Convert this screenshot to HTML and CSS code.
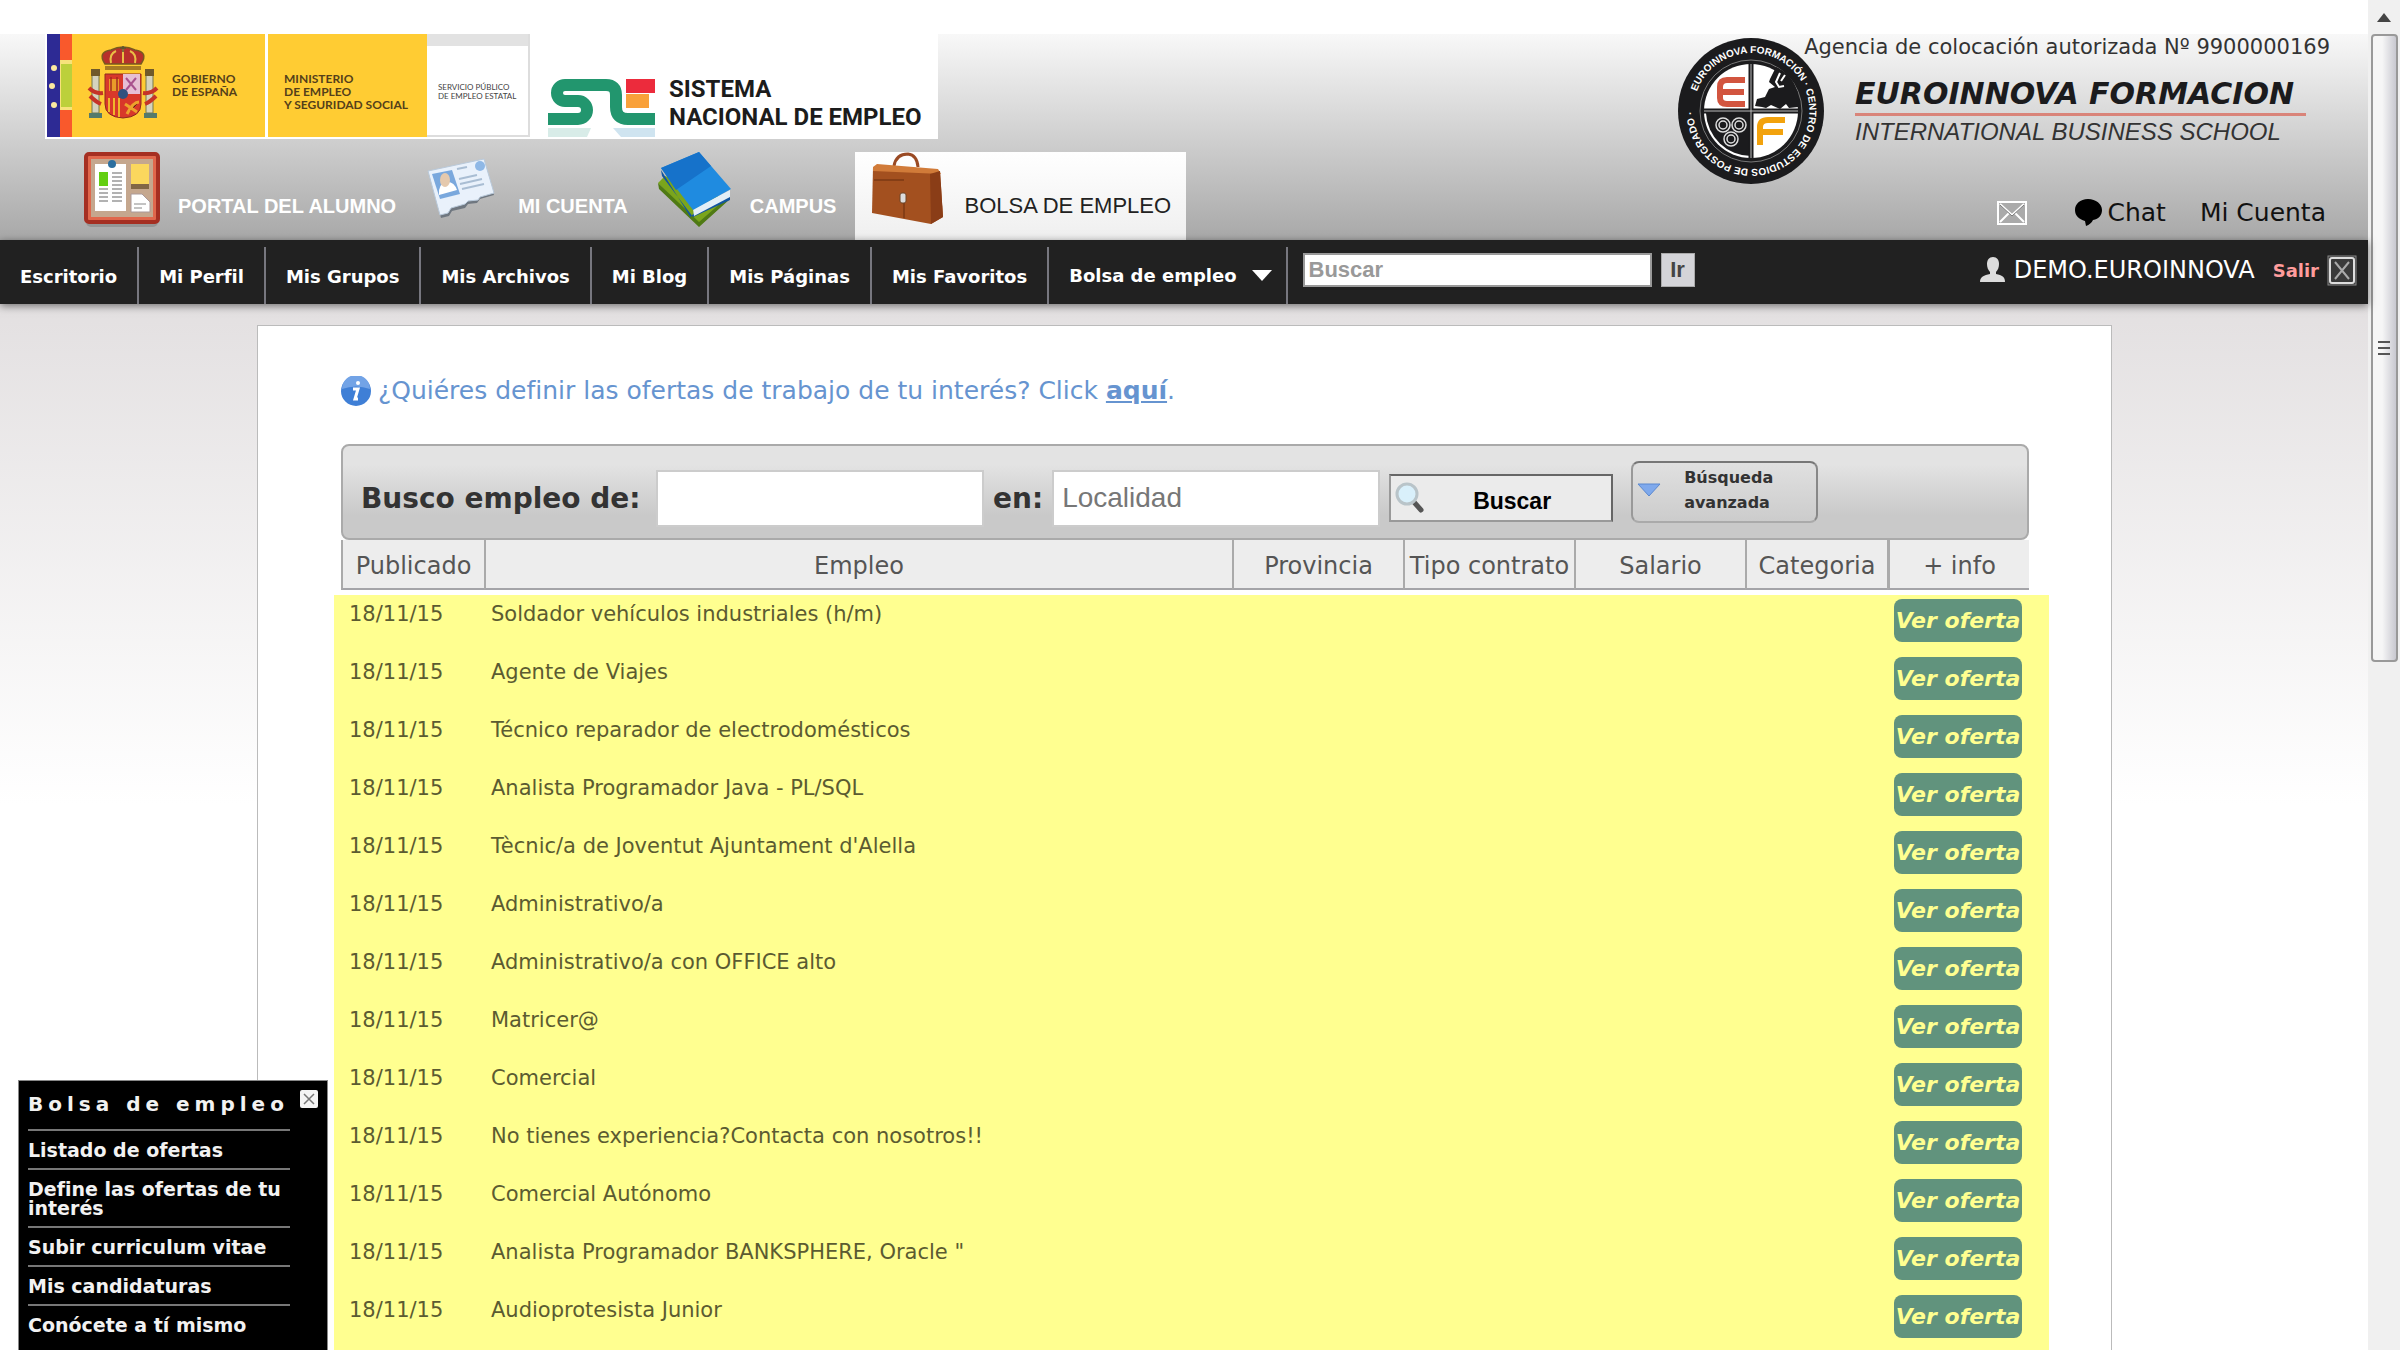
FILE: index.html
```html
<!DOCTYPE html>
<html lang="es">
<head>
<meta charset="utf-8">
<title>Bolsa de empleo - Euroinnova Formación</title>
<link rel="stylesheet" href="styles.css">
</head>
<body>
<div class="page">
  <header class="header">
    <div class="header-left">
      <svg class="sponsors" width="893" height="105" viewBox="0 0 893 105" role="img" aria-label="Gobierno de España, Sistema Nacional de Empleo">
        <rect width="893" height="105" fill="#fff"/>
        <rect x="2" width="13" height="103" fill="#2d2a94"/>
        <rect x="15" width="12" height="103" fill="#f9592c"/>
        <rect x="15" y="26" width="12" height="50" fill="#f7e27a"/>
        <rect x="16" y="30" width="11" height="43" fill="#bcd03b"/>
        <g fill="#fbe9a0"><circle cx="9" cy="34" r="3"/><circle cx="7" cy="52" r="3"/><circle cx="9" cy="71" r="3"/></g>
        <rect x="27" width="193" height="103" fill="#ffcc33"/>
        <rect x="223" width="159" height="103" fill="#ffcc33"/>
        <rect x="382" width="103" height="12" fill="#e2e2e2"/>
        <path d="M484 0V102H382" fill="none" stroke="#ddd" stroke-width="2"/>
        <g>
          <path d="M60 30q-8-12 6-14q12-6 24 0q14 2 6 14z" fill="#b8312b" stroke="#7a5a20" stroke-width="1.5"/>
          <path d="M66 29q-2-9 5-12M78 29V15M90 29q2-9-5-12" stroke="#e9bf45" stroke-width="2" fill="none"/>
          <path d="M60 34h36" stroke="#a87b23" stroke-width="4"/>
          <path d="M78 12v6M75 14h6" stroke="#5c5630" stroke-width="1.5"/>
          <path d="M60 40H96V70q0 13-18 14q-18-1-18-14z" fill="#d8382a" stroke="#8e2a20"/>
          <path d="M78 40h17v20H78z" fill="#e6bfd4"/>
          <path d="M81 44l10 12M91 44l-10 12" stroke="#a9528e" stroke-width="2"/>
          <path d="M64 45h10v12H64z" fill="#e99b29"/><path d="M66 43v14M72 43v14" stroke="#a42b20" stroke-width="1.5"/>
          <path d="M64 64v14M69 64v17M74 64v19" stroke="#f0b52b" stroke-width="2"/>
          <path d="M82 80q6-12 12-12M80 70l12 8" stroke="#eda22c" stroke-width="3"/>
          <circle cx="78" cy="60" r="5" fill="#32517f"/>
          <g fill="#d5d3bd" stroke="#77794c" stroke-width="1"><rect x="47" y="40" width="7" height="39"/><rect x="101" y="40" width="7" height="39"/></g>
          <path d="M46 35h9v7h-9zM100 35h9v7h-9z" fill="#705a2a"/>
          <path d="M44 79h13v5H44zM99 79h13v5H99z" fill="#557a6b"/>
          <path d="M44 54q6 6 14 5M45 62q6 6 11 8M112 54q-6 6-14 5M111 62q-6 6-11 8" stroke="#c63427" stroke-width="4" fill="none"/>
        </g>
        <g class="gov-text" fill="#54401a">
          <text x="127" y="49">GOBIERNO</text><text x="127" y="62">DE ESPAÑA</text>
          <text x="239" y="49">MINISTERIO</text><text x="239" y="62">DE EMPLEO</text><text x="239" y="75">Y SEGURIDAD SOCIAL</text>
        </g>
        <g class="sepe-text" fill="#444"><text x="393" y="56">SERVICIO PÚBLICO</text><text x="393" y="65">DE EMPLEO ESTATAL</text></g>
        <g fill="none" stroke="#22966e" stroke-width="12">
          <path d="M503 85H533a9 9 0 0 0 0-18H520a8 8 0 0 1 0-16H561q10 0 10 10V73q0 12 12 12H610"/>
        </g>
        <path d="M581 45h29v14h-29z" fill="#ec2b3c"/>
        <path d="M581 60h23v14h-23z" fill="#f9a13a"/>
        <path d="M503 94h43l-4 9h-39z" fill="#d8ece8"/><path d="M568 94h42v9h-34z" fill="#cfe4f0"/>
        <g class="sne-text" fill="#1c1c1c"><text x="624" y="63">SISTEMA</text><text x="624" y="91">NACIONAL DE EMPLEO</text></g>
      </svg>
      <nav class="tabs">
        <a class="tab" href="#">
          <svg width="76" height="76" viewBox="0 0 76 76" aria-hidden="true">
            <rect x="2" y="6" width="72" height="69" rx="5" fill="#777" opacity=".45"/>
            <rect x="2" y="2" width="72" height="68" rx="3" fill="#e0674c" stroke="#a52f22" stroke-width="4"/>
            <rect x="7" y="7" width="62" height="58" fill="#c5a78e"/>
            <rect x="11" y="12" width="31" height="47" fill="#fff"/>
            <rect x="15" y="20" width="9" height="14" fill="#63cf12"/>
            <path d="M28 21h10M28 25h10M28 29h10M28 33h10M28 37h10M28 41h10M28 45h10M28 49h10M15 37h9M15 41h9M15 45h9M15 49h9" stroke="#999" stroke-width="1.5"/>
            <circle cx="28" cy="12" r="4" fill="#2d6f9f"/>
            <path d="M47 15h18v22H47z" fill="#826646"/><path d="M47 12h18v20H47z" fill="#fbd75d"/>
            <path d="M47 42h11l8 8v10H47z" fill="#fff" stroke="#a99"/><path d="M50 52h12M50 56h8" stroke="#888"/>
          </svg>
          <span>PORTAL DEL ALUMNO</span>
        </a>
        <a class="tab" href="#">
          <svg width="76" height="76" viewBox="0 0 76 76" aria-hidden="true">
            <path d="M5 22L60 9l10 34-14 4-3 4-9 1-3 4-13 3-3 5-8 2z" fill="#6f7780"/>
            <path d="M4 19L60 7l10 34-14 4-2 3-10 1-3 3-14 4-3 5-8 2z" fill="#e9f1fb" stroke="#b9c9da"/>
            <path d="M8 22l20-4 8 24-20 5z" fill="#7aa8dd"/>
            <path d="M15 43q-1-11 7-13q8-1 11 8z" fill="#fff"/><ellipse cx="21" cy="28" rx="5" ry="7" fill="#e5c9ad"/>
            <path d="M33 17l10-2M35 27l18-4M36 32l22-5M38 37l22-5" stroke="#a9bdd3" stroke-width="2"/>
            <circle cx="56" cy="14" r="5" fill="#8fb8e6"/>
          </svg>
          <span>MI CUENTA</span>
        </a>
        <a class="tab" href="#">
          <svg width="76" height="76" viewBox="0 0 76 76" aria-hidden="true">
            <path d="M2 31L9 24 72 48 43 74z" fill="#7aa51c"/>
            <path d="M2 31l41 39 31-27v4L43 75 3 37z" fill="#4f7a14"/>
            <path d="M5 18L35 66q-4-3 39-26v8L37 65 6 24z" fill="#12549f"/>
            <path d="M37 57L74 38v7L38 64z" fill="#e3eef6"/>
            <path d="M5 16L43 0 75 37 37 58z" fill="#1f8be0"/>
            <path d="M5 16L43 0l12 14L20 38z" fill="#1672ca"/>
          </svg>
          <span>CAMPUS</span>
        </a>
        <a class="tab tab-active" href="#">
          <svg width="76" height="76" viewBox="0 0 76 76" aria-hidden="true">
            <path d="M24 14Q26 2 38 2q9 1 10 13" fill="none" stroke="#9a4a24" stroke-width="3"/>
            <path d="M3 15L70 19l3 46-12 7L2 61z" fill="#a3501f"/>
            <path d="M3 15l4-3 61 5 3 5-68-3z" fill="#d17b39"/>
            <path d="M60 22l10-3 3 46-12 7z" fill="#8a3d17"/>
            <path d="M4 28h30M34 46v20" stroke="#7c3815" stroke-width="1.5"/>
            <rect x="30" y="41" width="6" height="10" rx="2" fill="#ddd" stroke="#6f4427"/>
          </svg>
          <span>BOLSA DE EMPLEO</span>
        </a>
      </nav>
    </div>
    <div class="header-right">
      <div class="brand">
        <svg class="badge" width="148" height="148" viewBox="0 0 148 148" role="img" aria-label="Sello Euroinnova Formación">
          <circle cx="74" cy="74" r="73" fill="#1b1b1d"/>
          <circle cx="74" cy="74" r="51" fill="none" stroke="#777" stroke-width="1"/>
          <circle cx="74" cy="74" r="47" fill="#fff"/>
          <path d="M74 76V119A45 45 0 0 1 29 76z" fill="#1b1b1d"/>
          <path d="M74 27V121M27 74H121" stroke="#1b1b1d" stroke-width="5"/>
          <path d="M74 27V121M27 74H121" stroke="#bbb" stroke-width="1"/>
          <path d="M68 43H50q-7 0-7 7v11q0 6 7 6H68M44 55H67" fill="none" stroke="#d2553f" stroke-width="6"/>
          <path d="M83 108V90q0-7 8-7H108M84 95H106" fill="none" stroke="#f2a20d" stroke-width="6"/>
          <path d="M93 42l6-12q18 8 22 28l0 12-9 1-3-4-6 5-9-4-5 3-4-1-7-1 2-7 8-2 4-8 6-2-6-5z" fill="#1b1b1d"/>
          <path d="M103 36l-4 9 3 5 5-1M108 38l-4 6" fill="none" stroke="#fff" stroke-width="2"/>
          <g fill="none" stroke="#ddd" stroke-width="1.5"><circle cx="46" cy="88" r="7"/><circle cx="62" cy="88" r="7"/><circle cx="54" cy="102" r="7"/><circle cx="46" cy="88" r="4"/><circle cx="62" cy="88" r="4"/><circle cx="54" cy="102" r="4"/></g>
          <path id="ring" d="M17 66A58 58 0 1 1 17 82A58 58 0 0 1 17 66" fill="none"/>
          <text class="ring-text" fill="#fff"><textPath href="#ring" startOffset="12">EUROINNOVA FORMACIÓN · CENTRO DE ESTUDIOS DE POSTGRADO ·</textPath></text>
        </svg>
        <div class="brand-text">
          <p class="agency">Agencia de colocación autorizada Nº 9900000169</p>
          <p class="brand-name">EUROINNOVA FORMACION</p>
          <p class="brand-sub">INTERNATIONAL BUSINESS SCHOOL</p>
        </div>
      </div>
      <div class="quick-links">
        <a class="mail" href="#" aria-label="Mensajes">
          <svg width="30" height="24" viewBox="0 0 30 24"><rect x="1" y="1" width="28" height="22" fill="#aaa" stroke="#fff" stroke-width="2"/><path d="M3 3l12 11L27 3M3 21l9-9M27 21l-9-9" fill="none" stroke="#fff" stroke-width="2"/><path d="M3 4l12 11L27 4" fill="none" stroke="#777"/></svg>
        </a>
        <a class="chat" href="#">
          <svg width="27" height="28" viewBox="0 0 27 28" aria-hidden="true"><path d="M13 0C5 0 0 5 0 11s4 9 10 11l1 5q5-2 7-6c6-1 9-5 9-10C27 5 21 0 13 0z" fill="#000"/></svg>
          Chat
        </a>
        <a href="#">Mi Cuenta</a>
      </div>
    </div>
  </header>

  <nav class="navbar">
    <a class="nav-item" href="#">Escritorio</a>
    <a class="nav-item" href="#">Mi Perfil</a>
    <a class="nav-item" href="#">Mis Grupos</a>
    <a class="nav-item" href="#">Mis Archivos</a>
    <a class="nav-item" href="#">Mi Blog</a>
    <a class="nav-item" href="#">Mis Páginas</a>
    <a class="nav-item" href="#">Mis Favoritos</a>
    <a class="nav-item nav-drop" href="#">Bolsa de empleo
      <svg width="20" height="11" viewBox="0 0 20 11" aria-hidden="true"><path d="M0 0h20L10 11z" fill="#fff"/></svg>
    </a>
    <form class="site-search">
      <input type="text" placeholder="Buscar" aria-label="Buscar">
      <button type="button">Ir</button>
    </form>
    <div class="user">
      <svg width="26" height="26" viewBox="0 0 26 26" aria-hidden="true"><path d="M13 0c4 0 6 3 6 7 0 3-1 6-3 8v2c6 1 9 3 9 8H0c0-5 4-7 10-8v-2C8 13 7 10 7 7c0-4 2-7 6-7z" fill="#dcdcdc"/></svg>
      <span class="user-name">DEMO.EUROINNOVA</span>
      <a class="logout" href="#">Salir
        <svg width="30" height="31" viewBox="0 0 30 31" aria-hidden="true"><rect x="1" y="1" width="28" height="29" fill="#333" stroke="#888"/><rect x="3" y="3" width="24" height="25" rx="2" fill="#3a3a3a" stroke="#ddd" stroke-width="2"/><path d="M8 7l14 17M22 7L8 24" stroke="#aaa" stroke-width="2"/></svg>
      </a>
    </div>
  </nav>

  <main class="content">
    <section class="card">
      <p class="notice">
        <svg width="30" height="30" viewBox="0 0 30 30" aria-hidden="true"><circle cx="15" cy="15" r="15" fill="#3f7fd6"/><path d="M1 13a14 14 0 0 1 28 0q-14-5-28 0z" fill="#72a3e6"/><path d="M12 13h5l-3 10h3" fill="none" stroke="#fff" stroke-width="3"/><circle cx="17" cy="7" r="2" fill="#fff"/></svg>
        <span>¿Quiéres definir las ofertas de trabajo de tu interés? Click <a href="#">aquí</a>.</span>
      </p>
      <form class="job-search">
        <label class="job-label" for="job">Busco empleo de:</label>
        <input id="job" type="text">
        <label for="place">en:</label>
        <input id="place" type="text" placeholder="Localidad">
        <button class="btn-search" type="button">
          <svg width="30" height="32" viewBox="0 0 30 32" aria-hidden="true"><path d="M18 19l8 9" stroke="#555" stroke-width="5" stroke-linecap="round"/><circle cx="12" cy="12" r="10" fill="#d9f0fb" stroke="#b9c4c9" stroke-width="3"/></svg>
          <span>Buscar</span>
        </button>
        <button class="btn-advanced" type="button">
          <svg width="24" height="14" viewBox="0 0 24 14" aria-hidden="true"><path d="M1 1h22L12 13z" fill="#7fa9ec" stroke="#5b88cf"/></svg>
          <span>Búsqueda<br>avanzada</span>
        </button>
      </form>
      <table class="jobs">
        <colgroup><col class="c-date"><col><col class="c-mid"><col class="c-mid"><col class="c-mid"><col class="c-end"><col class="c-end"></colgroup>
        <thead><tr><th>Publicado</th><th>Empleo</th><th>Provincia</th><th>Tipo contrato</th><th>Salario</th><th>Categoria</th><th class="info">+ info</th></tr></thead>
        <tbody>
          <tr><td>18/11/15</td><td>Soldador vehículos industriales (h/m)</td><td></td><td></td><td></td><td></td><td><button type="button">Ver oferta</button></td></tr>
          <tr><td>18/11/15</td><td>Agente de Viajes</td><td></td><td></td><td></td><td></td><td><button type="button">Ver oferta</button></td></tr>
          <tr><td>18/11/15</td><td>Técnico reparador de electrodomésticos</td><td></td><td></td><td></td><td></td><td><button type="button">Ver oferta</button></td></tr>
          <tr><td>18/11/15</td><td>Analista Programador Java - PL/SQL</td><td></td><td></td><td></td><td></td><td><button type="button">Ver oferta</button></td></tr>
          <tr><td>18/11/15</td><td>Tècnic/a de Joventut Ajuntament d'Alella</td><td></td><td></td><td></td><td></td><td><button type="button">Ver oferta</button></td></tr>
          <tr><td>18/11/15</td><td>Administrativo/a</td><td></td><td></td><td></td><td></td><td><button type="button">Ver oferta</button></td></tr>
          <tr><td>18/11/15</td><td>Administrativo/a con OFFICE alto</td><td></td><td></td><td></td><td></td><td><button type="button">Ver oferta</button></td></tr>
          <tr><td>18/11/15</td><td>Matricer@</td><td></td><td></td><td></td><td></td><td><button type="button">Ver oferta</button></td></tr>
          <tr><td>18/11/15</td><td>Comercial</td><td></td><td></td><td></td><td></td><td><button type="button">Ver oferta</button></td></tr>
          <tr><td>18/11/15</td><td>No tienes experiencia?Contacta con nosotros!!</td><td></td><td></td><td></td><td></td><td><button type="button">Ver oferta</button></td></tr>
          <tr><td>18/11/15</td><td>Comercial Autónomo</td><td></td><td></td><td></td><td></td><td><button type="button">Ver oferta</button></td></tr>
          <tr><td>18/11/15</td><td>Analista Programador BANKSPHERE, Oracle "</td><td></td><td></td><td></td><td></td><td><button type="button">Ver oferta</button></td></tr>
          <tr><td>18/11/15</td><td>Audioprotesista Junior</td><td></td><td></td><td></td><td></td><td><button type="button">Ver oferta</button></td></tr>
        </tbody>
      </table>
    </section>
  </main>
</div>

<div class="scrollbar" aria-hidden="true">
  <svg class="scroll-arrow" width="14" height="9" viewBox="0 0 14 9"><path d="M7 0l7 9H0z" fill="#444"/></svg>
  <div class="scroll-thumb"><i></i><i></i><i></i></div>
</div>

<aside class="side-menu">
  <button class="close" type="button" aria-label="Cerrar">
    <svg width="18" height="18" viewBox="0 0 18 18"><rect width="18" height="18" rx="2" fill="#f4f4f4"/><path d="M4 4l10 10M14 4L4 14" stroke="#777" stroke-width="1.5"/></svg>
  </button>
  <h2>Bolsa de empleo</h2>
  <ul>
    <li><a href="#">Listado de ofertas</a></li>
    <li><a href="#">Define las ofertas de tu interés</a></li>
    <li><a href="#">Subir curriculum vitae</a></li>
    <li><a href="#">Mis candidaturas</a></li>
    <li><a href="#">Conócete a tí mismo</a></li>
  </ul>
</aside>
</body>
</html>
```
FILE: styles.css
```css
* { box-sizing: border-box; }

body {
  margin: 0;
  height: 100vh;
  display: flex;
  overflow: hidden;
  background: #fff;
  color: #333;
  font-family: "DejaVu Sans", Verdana, sans-serif;
}

a { color: inherit; text-decoration: none; }
p { margin: 0; }
button, input { font-family: inherit; margin: 0; }
svg { display: block; flex: none; }

.page { flex: 1; min-width: 0; padding-top: 34px; }

/* Header */
.header {
  display: flex;
  justify-content: space-between;
  height: 206px;
  background: linear-gradient(#f8f8f8, #d0d0d0 50%, #a8a8a8);
}
.header-left { display: flex; flex-direction: column; justify-content: space-between; }
.sponsors { margin-left: 45px; }
.gov-text { font: bold 12px Lato, sans-serif; }
.sepe-text { font: 8px Lato, sans-serif; }
.sne-text { font: bold 24px Roboto, sans-serif; }

.tabs { display: flex; margin-left: 70px; }
.tab {
  display: flex;
  align-items: flex-end;
  gap: 18px;
  height: 88px;
  padding: 0 14px 12px;
  color: #fff;
  font: bold 20px/38px "Liberation Sans", Arial, sans-serif;
  white-space: nowrap;
}
.tab span { height: 41px; }
.tab-active {
  margin-left: 5px;
  padding: 0 15px 12px;
  background: linear-gradient(#fff, #efefef);
  color: #222;
  font-size: 22px;
  font-weight: normal;
}

.header-right {
  display: flex;
  flex-direction: column;
  justify-content: space-between;
  align-items: flex-end;
  padding: 3px 38px 12px 0;
}
.brand { display: flex; gap: 30px; }
.brand-text { display: flex; flex-direction: column; width: 475px; white-space: nowrap; }
.agency { align-self: flex-end; font-size: 21px; line-height: 20px; }
.brand-name {
  width: 451px;
  margin-top: 18px;
  border-bottom: 3px solid #d98479;
  color: #1b1b1d;
  font-size: 30px;
  font-weight: bold;
  font-style: italic;
  line-height: 38px;
}
.brand-sub { margin-top: 2px; font: italic 24px/28px "Liberation Sans", Arial, sans-serif; }
.ring-text { font: bold 10px "Liberation Sans", Arial, sans-serif; }

.quick-links { display: flex; align-items: center; gap: 34px; padding-right: 4px; color: #111; font-size: 25px; line-height: 30px; }
.mail { margin-right: 14px; }
.chat { display: flex; align-items: center; gap: 5px; }

/* Navigation bar */
.navbar {
  position: relative;
  display: flex;
  align-items: flex-end;
  height: 64px;
  background: #212121;
  box-shadow: 0 2px 8px rgba(0, 0, 0, .5);
  color: #fff;
}
.nav-item {
  height: 57px;
  padding: 0 20px;
  border-right: 2px solid #77777f;
  font-size: 18px;
  font-weight: bold;
  line-height: 60px;
  white-space: nowrap;
}
.nav-drop { display: flex; align-items: center; gap: 15px; padding: 0 14px 0 20px; }
.site-search { display: flex; gap: 9px; align-self: flex-start; margin: 13px 0 0 15px; }
.site-search input {
  width: 349px;
  height: 34px;
  padding: 0 4px;
  border: 2px solid #999;
  font: bold 22px "Liberation Sans", Arial, sans-serif;
}
.site-search input::placeholder { color: #999; }
.site-search button {
  width: 34px;
  height: 34px;
  padding: 0;
  border: 1px solid #aaa;
  background: #d4d4d8;
  color: #444;
  font: bold 22px "Liberation Sans", Arial, sans-serif;
}
.user { display: flex; align-items: center; gap: 8px; align-self: flex-start; height: 60px; margin-left: auto; padding-right: 11px; }
.user-name { font-size: 24px; }
.logout { display: flex; align-items: center; gap: 8px; margin-left: 10px; color: #ff9c9c; font-size: 18px; font-weight: bold; }

/* Main card */
.content { padding: 21px 24px 0 25px; background: linear-gradient(#e3e0e1, #fff 500px); }
.card { max-width: 1855px; margin: 0 auto; padding: 45px 82px 0 83px; border: 1px solid #bbb; border-bottom: 0; background: #fff; }
.notice { display: flex; align-items: center; gap: 7px; height: 39px; color: #6694d0; font-size: 25px; }
.notice a { font-weight: bold; text-decoration: underline; }

.job-search {
  display: flex;
  align-items: center;
  height: 96px;
  margin-top: 34px;
  padding: 12px 18px 0;
  border: 2px solid #aaa;
  border-radius: 8px;
  background: linear-gradient(#e3e3e3 20%, #c9c9c9 75%);
}
.job-search label { font-size: 28px; font-weight: bold; white-space: nowrap; }
.job-search .job-label { min-width: 286px; }
.job-search input {
  width: 328px;
  height: 57px;
  margin: 0 9px;
  padding: 0 8px;
  border: 2px solid #ccc;
  background: #fff;
  font: 28px "Liberation Sans", Arial, sans-serif;
}
.job-search input::placeholder { color: #777; }
.btn-search {
  display: flex;
  align-items: center;
  width: 224px;
  height: 48px;
  padding: 0 12px 0 4px;
  border: 2px solid;
  border-color: #666 #666 #999 #999;
  background: #ebebeb;
  color: #000;
  font: bold 23px "Liberation Sans", Arial, sans-serif;
}
.btn-search span { flex: 1; padding-top: 6px; }
.btn-advanced {
  display: flex;
  align-items: center;
  gap: 23px;
  width: 187px;
  height: 62px;
  margin: -12px 0 0 18px;
  padding: 0 4px 4px;
  border: 2px solid;
  border-color: #777 #888 #aaa #999;
  border-radius: 8px;
  background: linear-gradient(#e0e0e0, #ccc);
  color: #333;
  font-size: 16px;
  font-weight: bold;
  line-height: 25px;
  text-align: left;
}

/* Job table */
.jobs { width: 100%; table-layout: fixed; border-spacing: 0; }
.c-date { width: 143px; }
.c-mid { width: 171px; }
.c-end { width: 142px; }
.jobs th {
  height: 50px;
  padding: 3px 0 0;
  border-left: 2px solid #aaa;
  border-bottom: 2px solid #a4a4a8;
  background: #ededed;
  color: #555;
  font-size: 24px;
  font-weight: normal;
  white-space: nowrap;
}
.jobs .info { border-left-width: 3px; }
.jobs tbody::before { content: ""; display: block; height: 5px; }
.jobs td {
  height: 58px;
  padding: 7px 0 0 7px;
  background: #ffff90;
  color: #5b5b31;
  font-size: 21px;
  line-height: 24px;
  vertical-align: top;
  white-space: nowrap;
}
.jobs td:first-child { padding-left: 8px; box-shadow: -7px 0 #ffff90; }
.jobs td:last-child { padding-top: 4px; box-shadow: 20px 0 #ffff90; }
.jobs tr:last-child td { height: 80px; }
.jobs button {
  display: block;
  width: 128px;
  height: 43px;
  padding: 0;
  border: 0;
  border-radius: 8px;
  background: #61937d;
  color: #ffff90;
  font-size: 22px;
  font-weight: bold;
  font-style: italic;
}

/* Scrollbar drawn at the window edge */
.scrollbar { display: flex; flex-direction: column; align-items: center; width: 32px; background: #f0f0f0; }
.scroll-arrow { margin: 13px 0 12px; }
.scroll-thumb {
  display: flex;
  flex-direction: column;
  align-items: center;
  justify-content: center;
  gap: 4px;
  width: 27px;
  height: 628px;
  border: 2px solid #999;
  border-radius: 4px;
  background: linear-gradient(90deg, #f6f6f6 40%, #c8c8d0);
}
.scroll-thumb i { width: 12px; height: 2px; background: #555; }

/* Floating menu */
.side-menu {
  position: fixed;
  left: 18px;
  bottom: 0;
  width: 310px;
  height: 270px;
  padding: 11px 37px 0 9px;
  border: 1px solid #888;
  border-bottom: 0;
  background: #000;
  color: #f2f2f2;
  font-weight: bold;
}
.side-menu h2 { margin: 0 0 4px; font-size: 20px; line-height: 24px; letter-spacing: 5px; white-space: nowrap; }
.side-menu ul { display: flex; flex-direction: column; gap: 8px; margin: 0; padding: 0; list-style: none; font-size: 19px; line-height: 19px; }
.side-menu li { padding-top: 10px; border-top: 2px solid #777; }
.side-menu ul { padding-top: 9px; }
.close { position: absolute; top: 9px; right: 9px; padding: 0; border: 0; background: none; }
```
